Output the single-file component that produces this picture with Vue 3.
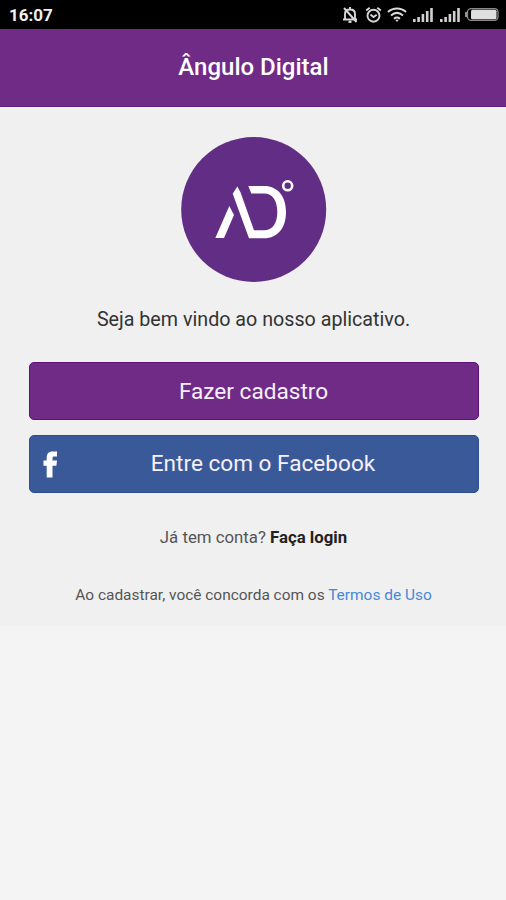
<script setup>
const bars = [3, 5, 8, 11, 14]
</script>

<template>
  <div class="screen">
    <div class="status">
      <span class="time">16:07</span>
      <div class="icons">
        <svg class="bell" width="16" height="18" viewBox="0 0 16 18" fill="none" stroke="#d8d8d8" stroke-width="1.9">
          <path d="M3 13.2V8c0-2.7 1.8-4.5 5-4.5S13 5.300 13 8v5.200M1 13.500h14M8 1v2.500M2 2l12.500 14" />
          <path d="M6.500 15.800h3" stroke-width="2.200" />
        </svg>
        <svg class="alarm" width="17" height="18" viewBox="0 0 17 18" fill="none" stroke="#d8d8d8" stroke-width="1.900">
          <circle cx="8.500" cy="9.700" r="6" />
          <path d="M1.200 4.500 4.700 1.700M15.800 4.500l-3.500-2.800M5.500 8.500l3 2.600 3.200-2.300" />
        </svg>
        <svg class="wifi" width="20" height="15" viewBox="0 0 20 15" fill="none" stroke="#dcdcdc" stroke-width="2">
          <path d="M1 5c5.300-4.700 12.700-4.700 18 0M4 8.500c3.700-3.200 8.300-3.200 12 0M7 11.700c1.900-1.500 4.100-1.500 6 0" />
          <path d="M8.200 12.800h3.600L10 15z" fill="#d8d8d8" stroke="none" />
        </svg>
        <svg v-for="n in 2" :key="n" class="signal" width="20" height="15" viewBox="0 0 20 15" fill="#d0d0d0">
          <rect v-for="(h, i) in bars" :key="i" :x="i * 4.300" :y="15 - h" width="2.600" :height="h" />
        </svg>
        <svg class="battery" width="34" height="13" viewBox="0 0 34 13">
          <rect x="2.500" y=".7" width="30.500" height="11.600" rx="3.500" fill="none" stroke="#8a8a8a" stroke-width="1.300" />
          <rect x="0" y="3.800" width="2.500" height="5.400" rx="1" fill="#929292" />
          <rect x="6" y="1.800" width="25.500" height="9.400" rx="1.500" fill="#dedede" />
        </svg>
      </div>
    </div>
    <header class="bar"><h1>Ângulo Digital</h1></header>
    <main class="content">
      <svg class="logo" width="146" height="146" viewBox="0 0 146 146">
        <circle cx="72.700" cy="72.500" r="72.500" fill="#622d84" />
        <g fill="#fff">
          <path d="M34.300 101 48.300 69l4.700 9L43 101z" />
          <path d="M51.700 56.800 56.300 49.500 59.600 55.500 73 93.200H83C91.500 93.200 96.300 86.500 96.300 75S91.500 56.500 83 56.500H70.300L67.300 49H83C97 49 105 59.500 105 75S97 101.300 83 101.300H68z" />
        </g>
        <circle cx="106.700" cy="48.800" r="4.500" fill="none" stroke="#fff" stroke-width="2.600" />
      </svg>
      <p class="welcome">Seja bem vindo ao nosso aplicativo.</p>
      <button class="btn signup">Fazer cadastro</button>
      <button class="btn facebook">
        <svg class="fb" width="15" height="27" viewBox="0 0 15 27" fill="#fff">
          <path d="M3.700 26.500V14.700H.5V9.500H3.700V6.600C3.700 2.200 6 .4 9.800.4H14V5.500H11.300C9.900 5.500 9.500 6.100 9.500 7.400V9.500H14L13.400 14.700H9.500V26.500z" />
        </svg>
        <span>Entre com o Facebook</span>
      </button>
      <p class="login">Já tem conta? <b>Faça login</b></p>
      <p class="terms">Ao cadastrar, você concorda com os <a>Termos de Uso</a></p>
    </main>
  </div>
</template>

<style>
body { margin: 0; background: #f4f4f4; }
</style>
<style scoped>
.screen { width: 506px; height: 900px; overflow: hidden; background: #f4f4f4; font-family: Roboto, sans-serif; }
.status { height: 29px; box-sizing: border-box; background: #000; display: flex; justify-content: space-between; align-items: center; padding: 0 7px 0 9px; }
.time { color: #f0f0f0; font-size: 17px; font-weight: 700; line-height: 29px; padding-top: 1px; }
.icons { display: flex; align-items: center; }
.alarm { margin-left: 7px; }
.wifi { margin-left: 5px; }
.signal { margin-left: 6px; }
.signal + .signal { margin-left: 7px; }
.battery { margin-left: 5px; }
.bar { height: 78px; box-sizing: border-box; background: #702b87; border-bottom: 1px solid #651b7d; padding-left: 1px; text-align: center; }
h1 { margin: 0; color: #fff; font-size: 24px; font-weight: 500; line-height: 77px; }
.content { height: 519px; box-sizing: border-box; background: #f0f0f0; border-top: 1px solid #fafafa; padding: 29px 27.500px 0 28.500px; display: flex; flex-direction: column; align-items: center; }
.logo { display: block; flex: none; margin-left: 1px; }
p { margin: 0; white-space: nowrap; }
.welcome { margin-top: 25px; font-size: 19.700px; line-height: 24px; color: #333; }
.btn { width: 450px; height: 58px; flex: none; box-sizing: border-box; border-radius: 5px; padding: 0; color: #f7effa; font-family: inherit; font-size: 22.600px; text-align: center; }
.signup { margin-top: 30px; background: #702b87; border: 1px solid #60107a; }
.facebook { margin-top: 15px; background: #3a5998; border: 1px solid #2d4f91; display: grid; grid-template-columns: 44px 1fr 25px; align-items: center; }
.facebook span { padding-bottom: 1px; }
.fb { margin-left: 13.500px; }
.login { margin-top: 34px; font-size: 16.800px; line-height: 20px; color: #555; }
.login b { color: #222; }
.terms { margin-top: 39px; font-size: 15.450px; line-height: 19px; color: #555; }
.terms a { color: #4589d8; }
</style>
